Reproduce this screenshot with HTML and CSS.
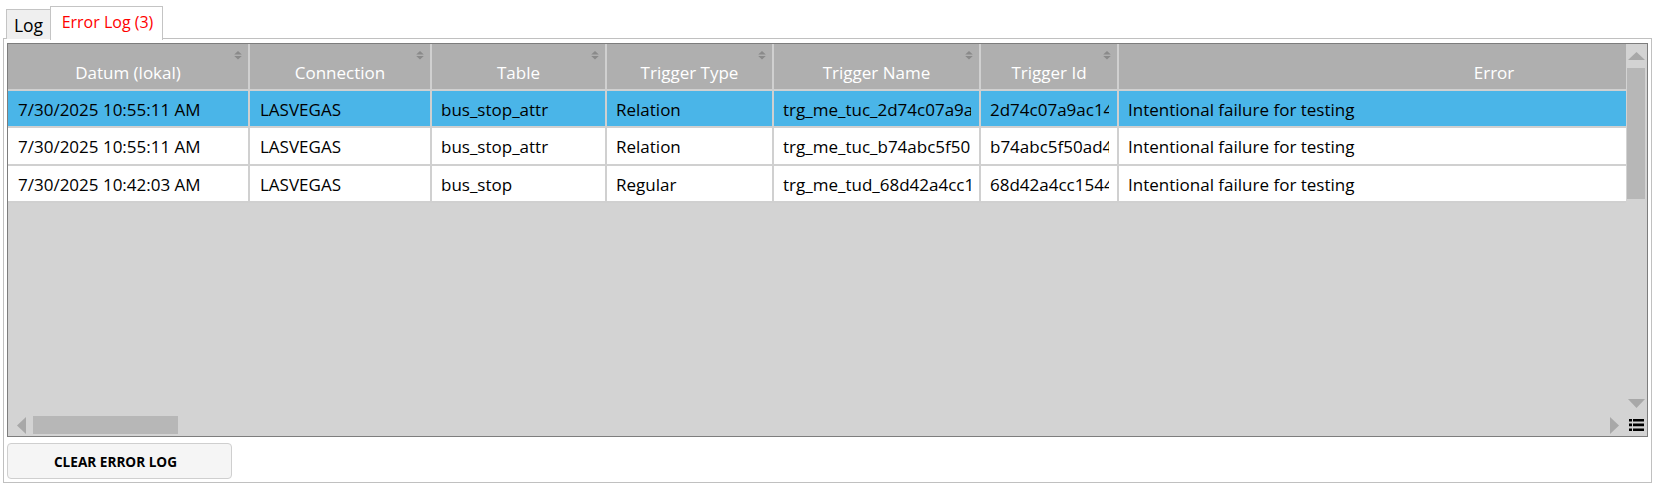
FILE: index.html
```html
<!DOCTYPE html>
<html lang="en">
<head>
<meta charset="utf-8">
<title>Error Log</title>
<link rel="stylesheet" href="styles.css">
</head>
<body>
<div class="tabs">
  <div class="tab">Log</div>
  <div class="tab active">Error Log (3)</div>
</div>
<main class="panel">
  <section class="grid">
    <div class="grid-main">
      <div class="row head">
        <div class="cell c1">Datum (lokal)<svg class="sort" viewBox="0 0 8 9"><path d="M4 0 8 3.6H0ZM0 5.4H8L4 9Z"/></svg></div>
        <div class="cell c2">Connection<svg class="sort" viewBox="0 0 8 9"><path d="M4 0 8 3.6H0ZM0 5.4H8L4 9Z"/></svg></div>
        <div class="cell c3">Table<svg class="sort" viewBox="0 0 8 9"><path d="M4 0 8 3.6H0ZM0 5.4H8L4 9Z"/></svg></div>
        <div class="cell c4">Trigger Type<svg class="sort" viewBox="0 0 8 9"><path d="M4 0 8 3.6H0ZM0 5.4H8L4 9Z"/></svg></div>
        <div class="cell c5">Trigger Name<svg class="sort" viewBox="0 0 8 9"><path d="M4 0 8 3.6H0ZM0 5.4H8L4 9Z"/></svg></div>
        <div class="cell c6">Trigger Id<svg class="sort" viewBox="0 0 8 9"><path d="M4 0 8 3.6H0ZM0 5.4H8L4 9Z"/></svg></div>
        <div class="cell c7">Error</div>
      </div>
      <div class="row selected">
        <div class="cell c1"><span>7/30/2025 10:55:11 AM</span></div>
        <div class="cell c2"><span>LASVEGAS</span></div>
        <div class="cell c3"><span>bus_stop_attr</span></div>
        <div class="cell c4"><span>Relation</span></div>
        <div class="cell c5"><span>trg_me_tuc_2d74c07a9a</span></div>
        <div class="cell c6"><span>2d74c07a9ac14</span></div>
        <div class="cell c7"><span>Intentional failure for testing</span></div>
      </div>
      <div class="row">
        <div class="cell c1"><span>7/30/2025 10:55:11 AM</span></div>
        <div class="cell c2"><span>LASVEGAS</span></div>
        <div class="cell c3"><span>bus_stop_attr</span></div>
        <div class="cell c4"><span>Relation</span></div>
        <div class="cell c5"><span>trg_me_tuc_b74abc5f50</span></div>
        <div class="cell c6"><span>b74abc5f50ad4</span></div>
        <div class="cell c7"><span>Intentional failure for testing</span></div>
      </div>
      <div class="row">
        <div class="cell c1"><span>7/30/2025 10:42:03 AM</span></div>
        <div class="cell c2"><span>LASVEGAS</span></div>
        <div class="cell c3"><span>bus_stop</span></div>
        <div class="cell c4"><span>Regular</span></div>
        <div class="cell c5"><span>trg_me_tud_68d42a4cc1</span></div>
        <div class="cell c6"><span>68d42a4cc1544</span></div>
        <div class="cell c7"><span>Intentional failure for testing</span></div>
      </div>
      <div class="hscroll">
        <svg class="h-arrow" viewBox="0 0 9 17"><path d="M9 0V17L0 8.5Z"/></svg>
        <div class="h-thumb"></div>
        <svg class="h-arrow end" viewBox="0 0 9 17"><path d="M0 0V17L9 8.5Z"/></svg>
      </div>
    </div>
    <div class="vscroll">
      <svg class="v-arrow" viewBox="0 0 17 8"><path d="M0 8H17L8.5 0Z"/></svg>
      <div class="v-thumb"></div>
      <svg class="v-arrow down" viewBox="0 0 17 9"><path d="M0 0H17L8.5 9Z"/></svg>
      <svg class="list-icon" viewBox="0 0 15 12"><path d="M0 0H3V2.4H0ZM4 0H15V2.4H4ZM0 4.6H3V7.2H0ZM4 4.6H15V7.2H4ZM0 9.4H3V12H0ZM4 9.4H15V12H4Z"/></svg>
    </div>
  </section>
  <button class="clear" type="button">CLEAR ERROR LOG</button>
</main>
</body>
</html>
```
FILE: styles.css
```css
* { box-sizing: border-box; }
html, body { margin: 0; height: 100%; background: #fff; }
body {
  width: 1654px;
  height: 487px;
  overflow: hidden;
  font-family: "Open Sans", "Noto Sans", sans-serif;
  font-size: 17px;
  color: #000;
}
.tabs {
  display: flex;
  align-items: flex-end;
  height: 39px;
  padding-left: 6px;
  margin-bottom: -1px;
}
.tab {
  height: 30px;
  width: 45px;
  display: flex;
  align-items: center;
  justify-content: center;
  background: #efefef;
  border: 1px solid #c4c4c4;
  border-bottom: 0;
  font-size: 17.5px;
}
.tab.active {
  width: 113px;
  height: 34px;
  margin-left: -1px;
  margin-bottom: -1px;
  padding: 0 0 3px 2px;
  background: #fff;
  color: #f00;
  font-size: 16px;
  z-index: 1;
}
.panel {
  height: 445px;
  margin: 0 2px 0 3px;
  padding: 4px 3px 3px;
  border: 1px solid #c0c0c0;
}
.grid {
  display: flex;
  height: 394px;
  border: 1px solid #7d7d7d;
  background: #d3d3d3;
}
.grid-main {
  flex: 0 0 1618px;
  display: flex;
  flex-direction: column;
  overflow: hidden;
}
.row {
  display: flex;
  flex: 0 0 37.33px;
  width: max-content;
  background: #fff;
  border-bottom: 2px solid #d0d0d0;
}
.row.head {
  flex-basis: 47px;
  background: #afafaf;
  color: #fff;
}
.row.selected { background: #4ab5e8; }
.cell {
  display: flex;
  align-items: center;
  padding: 2px 8px 0 10px;
  border-right: 2px solid #d0d0d0;
  min-width: 0;
}
.cell span {
  display: block;
  overflow: hidden;
  white-space: nowrap;
  flex: 1 1 auto;
  min-width: 0;
}
.c1 { width: 242px; }
.c2 { width: 182px; }
.c3 { width: 175px; padding-left: 9px; }
.c4 { width: 167px; padding-left: 9px; }
.c5 { width: 207px; padding-left: 9px; }
.c6 { width: 138px; padding-left: 9px; }
.c7 { width: 750px; padding-left: 9px; border-right: 0; }
.head .cell {
  position: relative;
  justify-content: center;
  padding: 12px 0 0;
}
.sort {
  position: absolute;
  top: 7px;
  right: 6px;
  width: 8px;
  height: 8.5px;
  fill: #8a8a8a;
}
.hscroll {
  margin-top: auto;
  display: flex;
  align-items: center;
  height: 18px;
  margin-bottom: 2px;
  padding: 0 7px 0 9px;
}
.h-arrow { width: 9px; height: 17px; fill: #a8a8a8; }
.h-arrow.end { margin-left: auto; }
.h-thumb { width: 145px; height: 18px; margin-left: 7px; background: #b7b7b7; }
.vscroll {
  flex: 0 0 20px;
  display: flex;
  flex-direction: column;
  align-items: center;
  padding-top: 8px;
}
.v-arrow { width: 17px; height: 8px; fill: #a8a8a8; flex: none; }
.v-arrow.down { height: 9px; margin-top: auto; }
.v-thumb { width: 18px; height: 131px; margin-top: 8px; background: #b7b7b7; flex: none; }
.list-icon { width: 15px; height: 12px; margin: 11px 0 5px; fill: #000; flex: none; }
.clear {
  display: block;
  width: 225px;
  height: 36px;
  margin-top: 6px;
  padding: 0 8px 0 0;
  background: #f5f5f5;
  border: 1px solid #cfcfcf;
  border-radius: 4px;
  font-family: inherit;
  font-size: 13.6px;
  font-weight: 700;
  color: #000;
}
```
